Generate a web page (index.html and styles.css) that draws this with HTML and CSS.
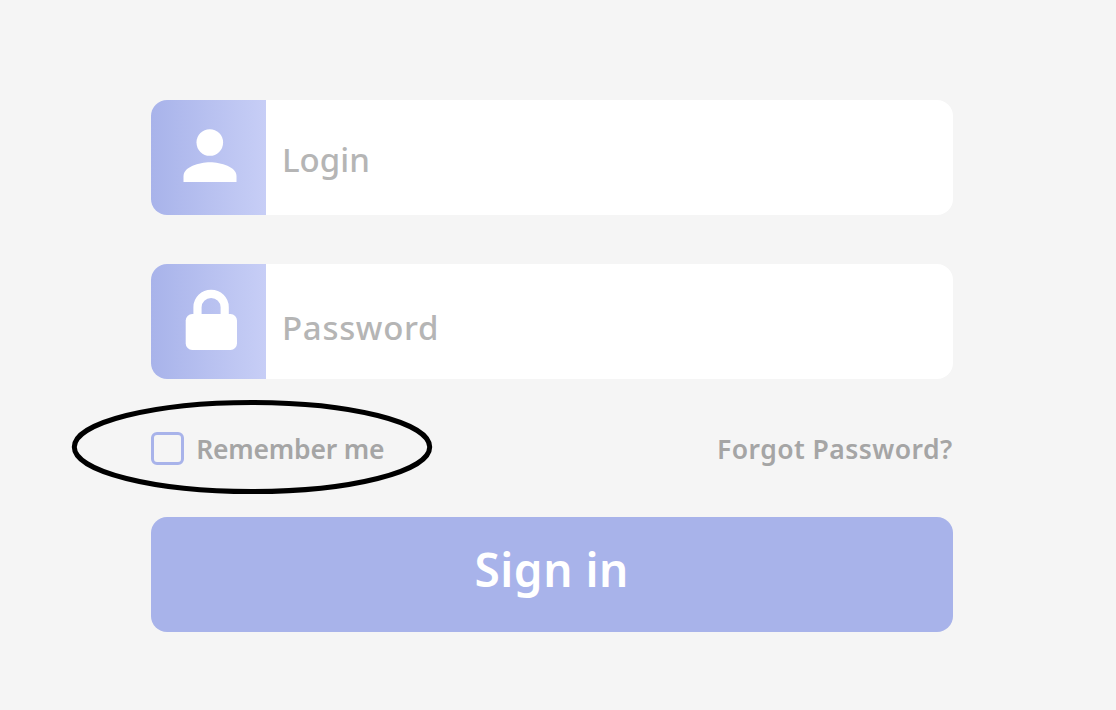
FILE: index.html
```html
<!DOCTYPE html>
<html lang="en">
<head>
<meta charset="utf-8">
<title>Sign in</title>
<link rel="stylesheet" href="styles.css">
</head>
<body>
<form class="form">
  <label class="field">
    <span class="field-icon"><svg class="icon" viewBox="0 0 115 115"><circle cx="58.8" cy="42.5" r="13.3"/><path d="M59 62.2C48 62.2 32.5 67 32.5 76V82H85.5V76C85.5 67 70 62.2 59 62.2Z"/></svg></span>
    <span class="placeholder login">Login</span>
  </label>
  <label class="field">
    <span class="field-icon"><svg class="icon" viewBox="0 0 115 115"><rect x="34.7" y="50" width="51.3" height="36" rx="6.5"/><path class="shackle" d="M46.5 53V43.2A13.6 13.3 0 0 1 73.7 43.2V53"/></svg></span>
    <span class="placeholder password">Password</span>
  </label>
  <div class="options">
    <div class="remember">
      <span class="checkbox"></span><span class="option-text remember-text">Remember me</span>
      <svg class="ring" viewBox="0 0 362 96"><ellipse cx="181" cy="48" rx="177.7" ry="44.6"/></svg>
    </div>
    <span class="option-text forgot">Forgot Password?</span>
  </div>
  <div class="submit"><span class="submit-text">Sign in</span></div>
</form>
</body>
</html>
```
FILE: styles.css
```css
body {
  margin: 0;
  background: #f5f5f5;
  font-family: "Noto Sans", sans-serif;
}
.form {
  display: flex;
  flex-direction: column;
  width: 802px;
  margin: 0 0 0 150.7px;
  padding-top: 99.5px;
}
.field {
  display: flex;
  height: 115px;
  margin-bottom: 49.5px;
  border-radius: 16px;
  overflow: hidden;
  background: #fff;
}
.field-icon {
  width: 115px;
  height: 115px;
  background: linear-gradient(90deg, #a8b3ea, #c7cef6);
}
.icon {
  display: block;
  width: 115px;
  height: 115px;
  fill: #fff;
}
.shackle {
  fill: none;
  stroke: #fff;
  stroke-width: 8.2;
}
.placeholder {
  padding: 40px 0 0 16.3px;
  font-size: 33px;
  line-height: 40px;
  font-weight: 500;
  color: #b5b5b5;
  white-space: nowrap;
}
.login {
  letter-spacing: 0;
}
.password {
  padding-top: 44px;
  letter-spacing: 0.7px;
}
.options {
  display: flex;
  justify-content: space-between;
  align-items: center;
  height: 40px;
  margin: 0 0 48.5px;
}
.remember {
  position: relative;
  display: flex;
  align-items: center;
}
.checkbox {
  box-sizing: border-box;
  width: 33px;
  height: 33px;
  margin-right: 12.5px;
  border: 3px solid #a8b3ea;
  border-radius: 6px;
}
.option-text {
  font-size: 26.5px;
  line-height: 32px;
  font-weight: 600;
  color: #a5a5a5;
  white-space: nowrap;
}
.remember-text {
  letter-spacing: -0.2px;
}
.forgot {
  letter-spacing: 0.45px;
}
.ring {
  position: absolute;
  left: -80px;
  top: -33px;
  width: 362px;
  height: 96px;
  fill: none;
  stroke: #000;
  stroke-width: 5;
}
.submit {
  display: flex;
  justify-content: center;
  height: 115px;
  border-radius: 16px;
  background: #a8b3ea;
}
.submit-text {
  padding-top: 24px;
  font-size: 46px;
  line-height: 56px;
  font-weight: 600;
  letter-spacing: 0.5px;
  color: #fff;
}
```
